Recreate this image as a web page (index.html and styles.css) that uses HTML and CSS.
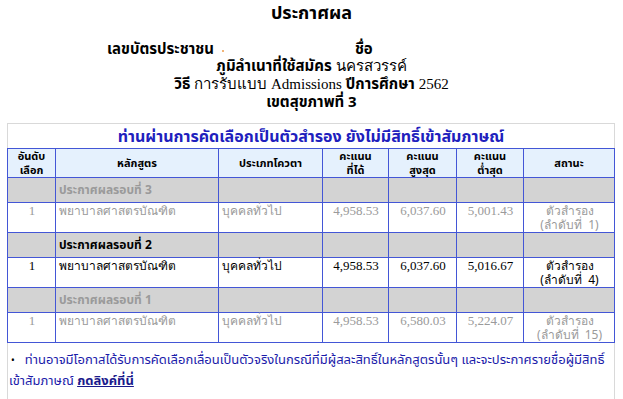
FILE: index.html
```html
<!DOCTYPE html>
<html lang="th">
<head>
<meta charset="utf-8">
<title>ประกาศผล</title>
<link rel="stylesheet" href="styles.css">
</head>
<body>
<div class="page">
  <h1 class="heading">ประกาศผล</h1>
  <div class="info">
    <div class="info-line id-line"><b>เลขบัตรประชาชน</b><span class="dot"></span><b class="name">ชื่อ</b></div>
    <div class="info-line"><b>ภูมิลำเนาที่ใช้สมัคร</b> <span class="serif">นครสวรรค์</span></div>
    <div class="info-line"><b>วิธี</b> <span class="serif">การรับแบบ Admissions</span> <b>ปีการศึกษา</b> <span class="serif">2562</span></div>
    <div class="info-line"><b>เขตสุขภาพที่ 3</b></div>
  </div>
  <div class="panel">
    <div class="panel-title">ท่านผ่านการคัดเลือกเป็นตัวสำรอง ยังไม่มีสิทธิ์เข้าสัมภาษณ์</div>
    <table class="result">
      <colgroup>
        <col class="c1"><col class="c2"><col class="c3"><col class="c4"><col class="c5"><col class="c6"><col class="c7">
      </colgroup>
      <thead>
        <tr>
          <th>อันดับ<br>เลือก</th>
          <th>หลักสูตร</th>
          <th>ประเภทโควตา</th>
          <th>คะแนน<br>ที่ได้</th>
          <th>คะแนน<br>สูงสุด</th>
          <th>คะแนน<br>ต่ำสุด</th>
          <th>สถานะ</th>
        </tr>
      </thead>
      <tbody>
        <tr class="round muted"><td></td><td>ประกาศผลรอบที่ 3</td><td></td><td></td><td></td><td></td><td></td></tr>
        <tr class="data muted">
          <td class="num">1</td><td class="th">พยาบาลศาสตรบัณฑิต</td><td class="th">บุคคลทั่วไป</td>
          <td class="num">4,958.53</td><td class="num">6,037.60</td><td class="num">5,001.43</td>
          <td class="status">ตัวสำรอง<br>(ลำดับที่&nbsp; 1)</td>
        </tr>
        <tr class="round"><td></td><td>ประกาศผลรอบที่ 2</td><td></td><td></td><td></td><td></td><td></td></tr>
        <tr class="data active">
          <td class="num">1</td><td class="th">พยาบาลศาสตรบัณฑิต</td><td class="th">บุคคลทั่วไป</td>
          <td class="num">4,958.53</td><td class="num">6,037.60</td><td class="num">5,016.67</td>
          <td class="status">ตัวสำรอง<br>(ลำดับที่&nbsp; 4)</td>
        </tr>
        <tr class="round muted"><td></td><td>ประกาศผลรอบที่ 1</td><td></td><td></td><td></td><td></td><td></td></tr>
        <tr class="data muted">
          <td class="num">1</td><td class="th">พยาบาลศาสตรบัณฑิต</td><td class="th">บุคคลทั่วไป</td>
          <td class="num">4,958.53</td><td class="num">6,580.03</td><td class="num">5,224.07</td>
          <td class="status">ตัวสำรอง<br>(ลำดับที่&nbsp; 15)</td>
        </tr>
      </tbody>
    </table>
    <p class="note"><span class="bullet">•</span>ท่านอาจมีโอกาสได้รับการคัดเลือกเลื่อนเป็นตัวจริงในกรณีที่มีผู้สละสิทธิ์ในหลักสูตรนั้นๆ และจะประกาศรายชื่อผู้มีสิทธิ์เข้าสัมภาษณ์ <a href="#" class="link">กดลิงค์ที่นี่</a></p>
  </div>
</div>
</body>
</html>
```
FILE: styles.css
```css
html, body {
  margin: 0;
  padding: 0;
  background: #ffffff;
}
body {
  font-family: Tahoma, "Noto Sans", "Noto Sans Thai", "DejaVu Sans", sans-serif;
  color: #000;
}
.page {
  width: 623px;
}
.heading {
  margin: 0;
  padding-top: 1px;
  height: 38px;
  text-align: center;
  font-size: 18px;
  font-weight: bold;
  line-height: 22px;
}
.info {
  display: flex;
  flex-direction: column;
  align-items: center;
  margin-top: 1px;
  font-size: 15px;
  line-height: 17px;
}
.info-line {
  white-space: nowrap;
}
.id-line {
  display: flex;
  align-items: center;
  align-self: flex-start;
  padding-left: 107px;
}
.id-line .dot {
  display: inline-block;
  width: 2px;
  height: 2px;
  background: #f2b477;
  margin: 5px 0 0 8px;
}
.id-line .name {
  margin-left: 131px;
}
.serif {
  font-family: "Liberation Serif", "Noto Sans", serif;
  font-size: 15px;
}
.panel {
  margin: 13px 0 0 7px;
  width: 606px;
  border: 1px solid #d9d9d9;
  border-bottom: none;
  padding-bottom: 20px;
}
.panel-title {
  height: 24px;
  text-align: center;
  color: #2020bd;
  font-size: 16px;
  font-weight: bold;
  line-height: 24px;
}
.result {
  border-collapse: collapse;
  width: 607px;
  margin-left: -1px;
  table-layout: fixed;
  font-size: 12px;
}
.c1 { width: 48px; }
.c2 { width: 163px; }
.c3 { width: 104px; }
.c4 { width: 66px; }
.c5 { width: 68px; }
.c6 { width: 67px; }
.c7 { width: 91px; }
.result th, .result td {
  border: 1px solid #4356d6;
  padding: 0 2px;
}
.result th {
  background: #e5f1fd;
  height: 28px;
  font-size: 11px;
  font-weight: bold;
  line-height: 14px;
  text-align: center;
  vertical-align: middle;
}
.round td {
  background: #d3d3d3;
  height: 24px;
  font-weight: bold;
  font-size: 12px;
  line-height: 16px;
  vertical-align: middle;
  padding-left: 3px;
}
.data td {
  height: 30px;
  box-sizing: border-box;
  vertical-align: top;
  padding-top: 1px;
  padding-bottom: 0;
  padding-left: 3px;
  font-family: "Liberation Serif", Tahoma, "Noto Sans", serif;
  font-size: 13px;
  line-height: 14px;
}
.data td.th {
  font-family: Tahoma, "Noto Sans", sans-serif;
  font-size: 12px;
}
.data td.num {
  text-align: center;
}
.data td.status {
  text-align: center;
  font-family: Tahoma, "Noto Sans", sans-serif;
  font-size: 12px;
  line-height: 14px;
}
.muted td {
  color: #9a9a9a;
}
.note {
  margin: 6px 0 0 0;
  padding-left: 1px;
  font-size: 13px;
  line-height: 21px;
  color: #1b1baa;
}
.bullet {
  color: #000;
  font-size: 10px;
  line-height: 1;
  margin: 0 10px 0 2px;
}
.link {
  color: #1a1a8c;
  font-weight: bold;
  text-decoration: underline;
}
```
